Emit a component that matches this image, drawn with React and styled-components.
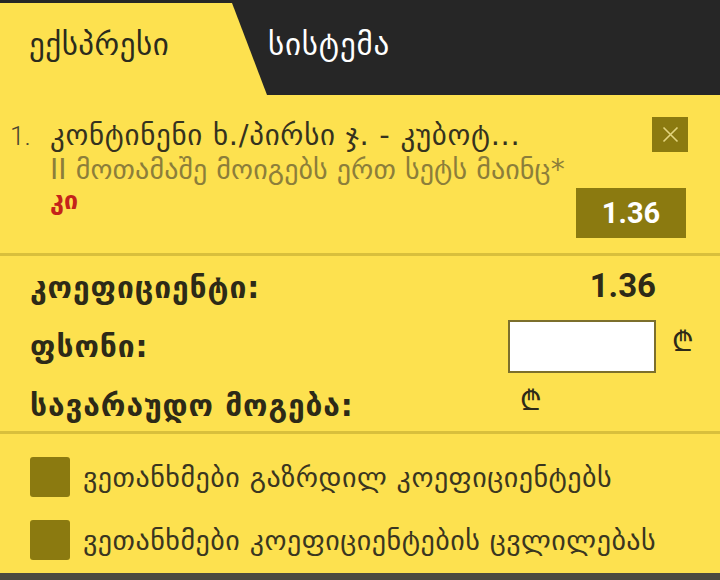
import React from "react";
import styled, { createGlobalStyle } from "styled-components";

const GlobalStyle = createGlobalStyle`
  html, body {
    margin: 0;
    padding: 0;
    background: #fde14f;
  }
  body {
    font-family: "Roboto", "DejaVu Sans", sans-serif;
  }
`;

const Page = styled.div`
  width: 720px;
  height: 580px;
  background: #fde14f;
  display: flex;
  flex-direction: column;
  overflow: hidden;
`;

const Header = styled.div`
  display: flex;
  height: 95px;
  padding-top: 3px;
  box-sizing: border-box;
  background: #262626;
`;

const Tab = styled.div`
  display: flex;
  align-items: center;
  padding-bottom: 10px;
  box-sizing: border-box;
  font-family: "DejaVu Sans", sans-serif;
  font-size: 31px;
  color: ${(p) => (p.$active ? "#2b2b1c" : "#ffffff")};
  background: ${(p) => (p.$active ? "#fde14f" : "transparent")};
  width: ${(p) => (p.$active ? "267px" : "auto")};
  padding-left: ${(p) => (p.$active ? "29px" : "1px")};
  letter-spacing: ${(p) => (p.$active ? "0.5px" : "0.8px")};
  clip-path: ${(p) =>
    p.$active ? "polygon(0 0, 232px 0, 100% 100%, 0 100%)" : "none"};
`;

const Item = styled.div`
  display: flex;
  justify-content: space-between;
  padding: 23px 34px 15px 10px;
  height: 158px;
  box-sizing: border-box;
`;

const ItemText = styled.div`
  display: flex;
  flex-direction: column;
  white-space: nowrap;
`;

const Title = styled.div`
  display: flex;
  align-items: baseline;
  font-family: "DejaVu Sans", sans-serif;
  font-size: 29px;
  letter-spacing: 0.7px;
  color: #35321e;
  line-height: 34px;
`;

const Num = styled.span`
  font-family: "Roboto", sans-serif;
  font-weight: 300;
  font-size: 26px;
  letter-spacing: 0;
  width: 40px;
  color: #4a4630;
`;

const Market = styled.div`
  font-size: 28px;
  color: #8c7e3a;
  line-height: 33px;
  padding-left: 40px;
  letter-spacing: 0.1px;
  font-family: "DejaVu Sans", sans-serif;
`;

const Pick = styled.div`
  font-size: 25px;
  color: #c4231a;
  font-weight: bold;
  line-height: 30px;
  padding-left: 40px;
  font-family: "DejaVu Sans", sans-serif;
`;

const ItemSide = styled.div`
  display: flex;
  flex-direction: column;
  align-items: flex-end;
  justify-content: space-between;
`;

const CloseButton = styled.div`
  width: 36px;
  height: 35px;
  background: #8b7a10;
  display: flex;
  align-items: center;
  justify-content: center;
  margin-top: -1px;
  margin-right: -2px;
`;

const OddsBox = styled.div`
  width: 110px;
  height: 50px;
  background: #8b7a10;
  color: #ffffff;
  font-family: "Roboto", sans-serif;
  font-weight: 700;
  font-size: 29px;
  display: flex;
  align-items: center;
  justify-content: center;
`;

const Divider = styled.div`
  height: 3px;
  background: #d8bf3c;
`;

const Summary = styled.div`
  display: grid;
  grid-template-columns: 478px 148px auto;
  grid-auto-rows: 59px;
  padding: 2px 0 0 30px;
  height: 175px;
  box-sizing: border-box;
  align-items: center;
`;

const Label = styled.div`
  font-family: "DejaVu Sans", sans-serif;
  font-weight: bold;
  font-size: 30px;
  letter-spacing: 0.9px;
  color: #2d2a17;
  white-space: nowrap;
`;

const Value = styled.div`
  font-family: "Roboto", sans-serif;
  font-weight: 700;
  font-size: 33px;
  color: #2d2a17;
  text-align: right;
  margin-top: -4px;
`;

const StakeInput = styled.input`
  width: 148px;
  height: 53px;
  box-sizing: border-box;
  border: 2px solid #7c6f2c;
  background: #ffffff;
  outline: none;
  margin: 0;
`;

const Lari = styled.div`
  font-family: "DejaVu Sans", sans-serif;
  font-size: 28px;
  color: #2d2a17;
  padding-left: ${(p) => p.$pad || 0}px;
  margin-top: ${(p) => p.$top || 0}px;
`;

const Options = styled.div`
  display: flex;
  flex-direction: column;
  gap: 23px;
  padding: 23px 0 0 30px;
  flex: 1;
`;

const Option = styled.label`
  display: flex;
  align-items: center;
  gap: 13px;
  font-family: "DejaVu Sans", sans-serif;
  font-size: 28px;
  letter-spacing: 0.5px;
  color: #3a3620;
  white-space: nowrap;
`;

const Box = styled.span`
  width: 40px;
  height: 40px;
  border-radius: 3px;
  background: #8b7a10;
  flex-shrink: 0;
`;

const Footer = styled.div`
  height: 7px;
  background: #4b4a40;
`;

export default function App() {
  return (
    <Page>
      <GlobalStyle />
      <Header>
        <Tab $active>ექსპრესი</Tab>
        <Tab>სისტემა</Tab>
      </Header>
      <Item>
        <ItemText>
          <Title>
            <Num>1.</Num>
            კონტინენი ხ./პირსი ჯ. - კუბოტ...
          </Title>
          <Market>II მოთამაშე მოიგებს ერთ სეტს მაინც*</Market>
          <Pick>კი</Pick>
        </ItemText>
        <ItemSide>
          <CloseButton>
            <svg width="17" height="17" viewBox="0 0 17 17">
              <path
                d="M1.5 1.5 L15.5 15.5 M15.5 1.5 L1.5 15.5"
                stroke="#e3d57e"
                strokeWidth="1.6"
                fill="none"
              />
            </svg>
          </CloseButton>
          <OddsBox>1.36</OddsBox>
        </ItemSide>
      </Item>
      <Divider />
      <Summary>
        <Label>კოეფიციენტი:</Label>
        <Value>1.36</Value>
        <div />
        <Label>ფსონი:</Label>
        <StakeInput type="text" />
        <Lari $pad={16} $top={-14}>₾</Lari>
        <Label>სავარაუდო მოგება:</Label>
        <Lari $pad={12} $top={-14}>₾</Lari>
        <div />
      </Summary>
      <Divider />
      <Options>
        <Option>
          <Box />
          ვეთანხმები გაზრდილ კოეფიციენტებს
        </Option>
        <Option>
          <Box />
          ვეთანხმები კოეფიციენტების ცვლილებას
        </Option>
      </Options>
      <Footer />
    </Page>
  );
}
